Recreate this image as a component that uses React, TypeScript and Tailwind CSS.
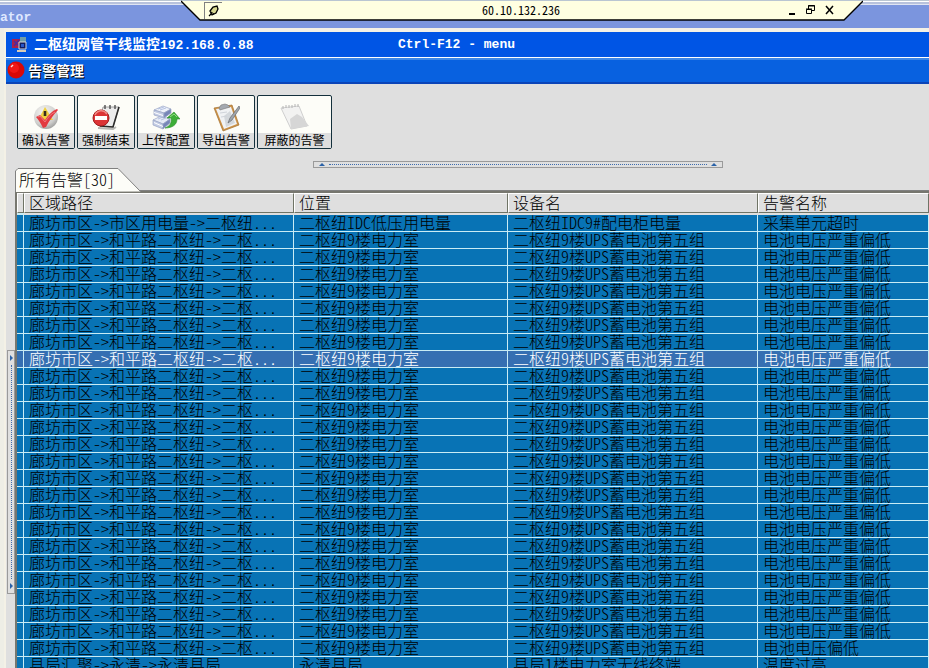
import React from "react";

type Alarm = { path: string; place: string; device: string; name: string };

const battery: Alarm = {
  path: "廊坊市区->和平路二枢纽->二枢...",
  place: "二枢纽9楼电力室",
  device: "二枢纽9楼UPS蓄电池第五组",
  name: "电池电压严重偏低",
};

const alarms: Alarm[] = [
  { path: "廊坊市区->市区用电量->二枢纽...", place: "二枢纽IDC低压用电量", device: "二枢纽IDC9#配电柜电量", name: "采集单元超时" },
  ...Array.from({ length: 24 }, () => battery),
  { ...battery, name: "电池电压偏低" },
  { path: "县局汇聚->永清->永清县局", place: "永清县局", device: "县局1楼电力室无线终端", name: "温度过高" },
];

const SELECTED = 8;

function ConfirmIcon() {
  return (
    <svg width="26" height="28" viewBox="0 0 26 28">
      <defs>
        <radialGradient id="ball" cx="0.4" cy="0.3" r="0.75">
          <stop offset="0" stopColor="#f6f6f4" />
          <stop offset="0.7" stopColor="#cfcfcd" />
          <stop offset="1" stopColor="#9a9a98" />
        </radialGradient>
      </defs>
      <circle cx="13" cy="14" r="12" fill="url(#ball)" />
      <path d="M12 4l8 13H5z" fill="#f0d040" />
      <path d="M12 8v5" stroke="#3a2c1c" strokeWidth="2.6" />
      <path d="M3 14l4-2 5 5c3-5 7-9 12-11l1 1c-5 5-9 11-12 17l-3 1c-2-4-4-8-7-11z" fill="#e23a40" />
      <path d="M5 14l2-1 5 6c3-5 6-8 10-10" fill="none" stroke="#f4888a" strokeWidth="0.8" />
    </svg>
  );
}

function ForceEndIcon() {
  return (
    <svg width="28" height="28" viewBox="0 0 28 28">
      <path d="M6 25l15 1 3-2" fill="none" stroke="#b8b8b4" strokeWidth="2" />
      <path d="M11 4h16l-6 20L7 23z" fill="#ececec" stroke="#8a8a8a" strokeWidth="0.8" />
      <path d="M27 4l-6 20-13-1" fill="none" stroke="#2c2c2c" strokeWidth="1.6" />
      <path d="M13 2v4M18 2v4M23 2v4" stroke="#444" strokeWidth="1.3" />
      <circle cx="9" cy="15" r="8" fill="#dc3436" stroke="#a01c1e" />
      <path d="M3 12c2-5 9-6 12-1" fill="none" stroke="#f08884" strokeWidth="1.5" />
      <rect x="3" y="13" width="12" height="4" fill="#fff" />
    </svg>
  );
}

function UploadIcon() {
  return (
    <svg width="28" height="28" viewBox="0 0 28 28">
      <g strokeWidth="0.7" strokeLinejoin="round" stroke="#98a4c4">
        <path d="M1 17l8-4 9 3-7 5z" fill="#e6ebf6" />
        <path d="M1 17l10 4v5L1 22z" fill="#c3cce4" />
        <path d="M11 21l7-5v4l-7 6z" fill="#7786b8" />
        <path d="M2 7l9-4 8 3-7 4z" fill="#eef2fa" />
        <path d="M2 7l10 3v5L2 12z" fill="#c3cce4" />
        <path d="M12 10l7-4v4l-7 5z" fill="#7786b8" />
      </g>
      <path d="M2 9.500l9 3M2 19.500l9 4" stroke="#fff" />
      <path d="M6 6l6-2M8 7l6-2M6 16l5-2M9 17l5-2" stroke="#a8b8dc" strokeWidth="0.8" />
      <path d="M13 25c5-2 7-5 6-10h-4l7-6 6 7h-3c0 6-5 9-12 9z" fill="#3cae38" stroke="#2c8a2c" strokeWidth="0.6" />
      <path d="M18 14l4-3 3 3" fill="none" stroke="#90dc80" />
    </svg>
  );
}

function ExportIcon() {
  return (
    <svg width="28" height="30" viewBox="0 0 28 30">
      <path d="M2 6l18-3 7 20-16 6z" fill="#cc9248" stroke="#a4702e" strokeWidth="0.7" />
      <path d="M4 7l15-2 6 17-13 5z" fill="#f0f2f4" />
      <path d="M12 14l6-5 5 12-9 4z" fill="#d4d8dc" />
      <path d="M7 6l2-3 4-1 3 1 2 2-10 3z" fill="#a4a9b0" stroke="#777" strokeWidth="0.6" />
      <path d="M8 11l7-1M9 15l6-1" stroke="#d0d4da" />
      <path d="M27 4L18 16l-2 5 4-3L28 6z" fill="#a0a5ac" stroke="#656a70" strokeWidth="0.7" />
    </svg>
  );
}

function ShieldedIcon() {
  return (
    <svg width="30" height="28" viewBox="0 0 30 28">
      <path d="M1 5l18-2 8 20-16 3z" fill="#f2f2f1" stroke="#cfcfcf" />
      <path d="M10 16l7-5 5 3 7 9-18 3z" fill="#d6d6d6" />
      <path d="M3 3v3M6 2v3M9 2v3M12 2v3M15 1v3M18 1v3" stroke="#b4b4b4" />
    </svg>
  );
}

const tools = [
  { label: "确认告警", icon: <ConfirmIcon />, width: "w-[58px]" },
  { label: "强制结束", icon: <ForceEndIcon />, width: "w-[58px]" },
  { label: "上传配置", icon: <UploadIcon />, width: "w-[58px]" },
  { label: "导出告警", icon: <ExportIcon />, width: "w-[58px]" },
  { label: "屏蔽的告警", icon: <ShieldedIcon />, width: "w-[75px]" },
];

function ConnectionBar() {
  return (
    <div className="absolute left-[181px] top-0 h-[21px] w-[682px]">
      <svg className="absolute inset-0" width="682" height="21" viewBox="0 0 682 21">
        <path d="M0 1h682l-19 19H19z" fill="#ffffe1" />
        <path d="M0 1l19 19h644l19-19" fill="none" stroke="#000" strokeWidth="1.3" />
      </svg>
      <div className="relative flex h-5 items-center pl-[23px] pr-[29px] text-black">
        <button aria-label="固定" className="flex h-[17px] w-[18px] items-center justify-center border-l border-t border-[#808080]">
          <svg width="11" height="12" viewBox="0 0 11 12">
            <path d="M1 11l3-3" stroke="#000" strokeWidth="1.2" />
            <path d="M2 6l3-4 4-1 1 3-2 4-4 2z" fill="#d8d890" stroke="#000" strokeWidth="1.3" />
            <path d="M3 7l3 2" stroke="#000" />
          </svg>
        </button>
        <span className="flex-1 pl-8 text-center text-xs">60.10.132.236</span>
        <div className="flex items-center gap-[10px]">
          <button aria-label="最小化">
            <svg width="8" height="10" viewBox="0 0 8 10"><path d="M1 9h6" stroke="#000" strokeWidth="2" /></svg>
          </button>
          <button aria-label="还原">
            <svg width="9" height="10" viewBox="0 0 9 10" fill="none" stroke="#000"><path d="M2.500 4V.5h6v5H6M2 1h7M.5 4.500h5v4h-5zM0 4h6" /></svg>
          </button>
          <button aria-label="关闭">
            <svg width="9" height="10" viewBox="0 0 9 10"><path d="M1 1l7 8M8 1L1 9" stroke="#000" strokeWidth="1.5" /></svg>
          </button>
        </div>
      </div>
    </div>
  );
}

function Cell({ children }: { children: string }) {
  return <td className="whitespace-nowrap border-b border-r border-[#c9ecf5] p-0 pl-[5px] align-top">{children}</td>;
}

function HeadCell({ children }: { children: string }) {
  return (
    <th className="h-5 whitespace-nowrap border-b border-l border-r border-t border-b-[#6f7466] border-l-white border-r-[#6f7466] border-t-white p-0 pb-[2px] pl-1 text-left font-light">
      {children}
    </th>
  );
}

export default function App() {
  return (
    <div className="relative flex h-screen flex-col overflow-hidden bg-[#dfdfdf] font-['Noto_Sans_CJK_SC',sans-serif] text-black [font-feature-settings:'hwid']">
      <header className="h-7 shrink-0 border-t border-[#bac6d2] bg-[#7b95de]">
        <div className="h-1 border-b border-t border-b-[#dfe4f2] border-t-white bg-[#b8c2dc]" />
        <div className="pt-[5px] font-['Liberation_Mono',monospace] text-[13px] font-bold leading-4 text-[#dfe8ff]">ator</div>
      </header>
      <ConnectionBar />

      <div className="flex min-h-0 flex-1">
        <aside className="w-1 shrink-0 bg-[#eeeee6]" />
        <main className="flex min-w-0 flex-1 flex-col border-l-2 border-t-4 border-[#f4f1e6]">
          <div className="flex h-[26px] shrink-0 items-center border-b border-white bg-[#0055e5] text-sm font-bold leading-5 text-white">
            <svg className="mx-[6px]" width="16" height="16" viewBox="0 0 16 16">
              <path d="M0 2h9v9H0z" fill="#a8204e" />
              <path d="M2 4l5 5M7 3L2 9" stroke="#4c2aa0" strokeWidth="1.5" />
              <path d="M8 0h6v6H8z" fill="#6f9da8" />
              <path d="M7 5h7v7H7z" fill="#101c60" stroke="#d8d8d8" />
              <path d="M9 7h3v3H9z" fill="#2858c8" />
              <path d="M5 13h9v2H5z" fill="#d9cdb8" />
            </svg>
            <span className="w-[364px] whitespace-nowrap">
              二枢纽网管干线监控
              <span className="font-['Liberation_Mono',monospace] text-[13px]">192.168.0.88</span>
            </span>
            <span className="whitespace-nowrap font-['Liberation_Mono',monospace] text-[13px]">Ctrl-F12 - menu</span>
          </div>
          <div className="flex h-[26px] shrink-0 items-center gap-[2px] border-b-2 border-t-2 border-b-[#0a44b8] border-t-[#3c86e8] bg-[#0861e0] pb-[2px]">
            <svg width="20" height="18" viewBox="0 0 20 18">
              <circle cx="10" cy="9" r="8.500" fill="#d80808" />
              <circle cx="8" cy="7" r="5" fill="#f01616" />
              <path d="M5 6l2-2" stroke="#ffd8d8" strokeWidth="1.5" />
            </svg>
            <h1 className="text-sm font-bold leading-5 text-white [text-shadow:1px_1px_0_#000]">告警管理</h1>
          </div>

          <div className="flex shrink-0 gap-[2px] pl-[11px] pt-[11px]">
            {tools.map((t) => (
              <button key={t.label} className={`${t.width} flex h-[54px] flex-col rounded-xs border border-[#14303c] bg-[#fdfdf8] text-xs leading-4`}>
                <span className="flex h-[37px] w-full items-center justify-center pt-1">{t.icon}</span>
                <span className="h-[15px] w-full whitespace-nowrap bg-[#dedede] text-center leading-[14px]">{t.label}</span>
              </button>
            ))}
          </div>

          <div className="ml-auto mr-[206px] mt-3 flex h-[7px] w-[410px] shrink-0 items-center justify-between border border-[#9a9a9a] px-[5px]">
            <i className="border-x-[3px] border-b-[3px] border-x-transparent border-b-[#2a62a8]" />
            <i className="mx-1 flex-1 border-t border-dotted border-[#3c6cae]" />
            <i className="border-x-[3px] border-b-[3px] border-x-transparent border-b-[#2a62a8]" />
          </div>

          <div className="flex min-h-0 flex-1">
            <div className="flex w-[9px] shrink-0 flex-col pl-px pt-[182px]">
              <div className="flex h-[244px] flex-col items-center justify-between border border-[#9a9a9a] py-1">
                <i className="border-y-[3px] border-l-[3px] border-y-transparent border-l-[#2a62a8]" />
                <i className="my-1 flex-1 border-l border-dotted border-[#3c6cae]" />
                <i className="border-y-[3px] border-l-[3px] border-y-transparent border-l-[#2a62a8]" />
              </div>
            </div>
            <section className="flex min-w-0 flex-1 flex-col">
              <div className="relative h-[23px] shrink-0 border-b border-[#808080]">
                <svg className="absolute left-0 top-0" width="126" height="24" viewBox="0 0 126 24">
                  <path d="M.5 24V3L3 .5h100L125.500 23.500" fill="#fdfdf8" stroke="#808080" />
                </svg>
                <span className="relative block pl-1 text-base font-light leading-[22px]">所有告警[30]</span>
              </div>
              <div className="min-h-0 flex-1 overflow-hidden border-l-2 border-t-2 border-[#77776f]">
                <table className="w-full table-fixed border-separate border-spacing-0 text-base font-light leading-4">
                  <colgroup>
                    <col className="w-[7px]" />
                    <col className="w-[270px]" />
                    <col className="w-[214px]" />
                    <col className="w-[250px]" />
                    <col />
                  </colgroup>
                  <thead>
                    <tr>
                      <th className="h-5 border border-b-[#6f7466] border-l-white border-r-[#6f7466] border-t-white p-0" />
                      <HeadCell>区域路径</HeadCell>
                      <HeadCell>位置</HeadCell>
                      <HeadCell>设备名</HeadCell>
                      <HeadCell>告警名称</HeadCell>
                    </tr>
                  </thead>
                  <tbody className="leading-[14px] before:block before:h-[2px] before:bg-[#c9ecf5]">
                    {alarms.map((a, i) => (
                      <tr key={i} className={`h-[17px] ${i === SELECTED ? "bg-[#356fb2] text-white" : "bg-[#0873b5] text-black"}`}>
                        <td className="border-b border-r border-[#c9ecf5] p-0" />
                        <Cell>{a.path}</Cell>
                        <Cell>{a.place}</Cell>
                        <Cell>{a.device}</Cell>
                        <Cell>{a.name}</Cell>
                      </tr>
                    ))}
                  </tbody>
                </table>
              </div>
            </section>
          </div>
        </main>
      </div>
    </div>
  );
}
